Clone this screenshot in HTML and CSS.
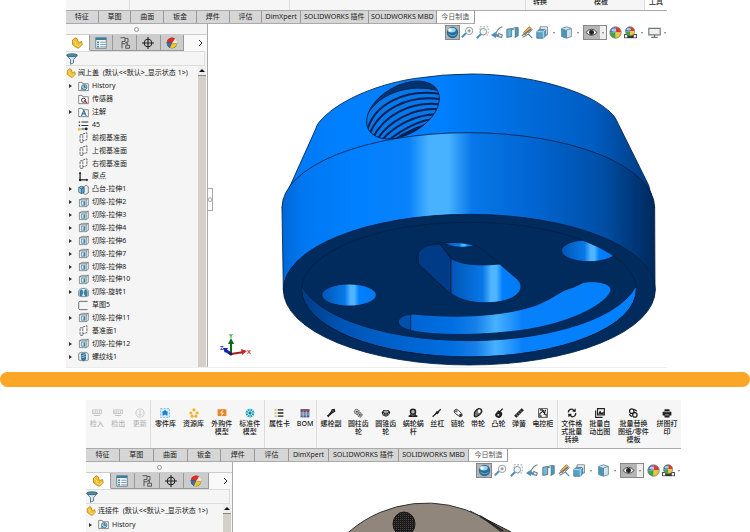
FILE: index.html
```
<!DOCTYPE html>
<html lang="zh-CN">
<head>
    <meta charset="UTF-8">
    <meta name="viewport" content="width=device-width, initial-scale=1.0">
    <title>今日制造</title>
    <link rel="stylesheet" href="styles.css">
</head>
<body>
    <!-- icon sprite -->
    <svg class="sprite" aria-hidden="true">
        <defs>
            <linearGradient id="steel" x1="0" x2="1"><stop offset="0" stop-color="#b9dbea"/><stop offset="1" stop-color="#3f8fb5"/></linearGradient>
            <symbol id="i-part" viewBox="0 0 16 16"><path d="M2 4l4-3 3 2v3l2 1 3-1 1 4-5 5-3-1-5-4z" fill="#f2bd2c" stroke="#a87808"/><path d="M3 5l3 2v3l4 3 4-4" fill="none" stroke="#fff0a0"/></symbol>
            <symbol id="i-list" viewBox="0 0 16 16"><path d="M1 1h14v14H1z" fill="#eef5f8" stroke="#456b80"/><path d="M1 1h14v3H1z" fill="#3c7c9c"/><path d="M3 6h2v2H3zM3 9h2v2H3zM3 12h2v2H3z" fill="#2d6f90"/><path d="M7 7h7M7 10h7M7 13h7" stroke="#6b8794"/></symbol>
            <symbol id="i-config" viewBox="0 0 16 16"><path d="M2 1h6v5H4v9M4 9h4M8 2h4v5H9M8 8h3v3h3v4H9v-4h2" fill="none" stroke="#555" stroke-width="1.300"/></symbol>
            <symbol id="i-target" viewBox="0 0 16 16"><circle cx="8" cy="8" r="5" fill="none" stroke="#222" stroke-width="1.5"/><path d="M8 0v16M0 8h16" stroke="#222" stroke-width="1.5"/></symbol>
            <symbol id="i-ball" viewBox="0 0 16 16"><path d="M8 8V1A7 7 0 0 0 1 8z" fill="#3577c8"/><path d="M8 8V1a7 7 0 0 1 7 7z" fill="#d93a32"/><path d="M8 8h7a7 7 0 0 1-7 7z" fill="#efc72e"/><path d="M8 8v7a7 7 0 0 1-7-7z" fill="#3ca545"/><circle cx="8" cy="8" r="7" fill="none" stroke="#777"/><ellipse cx="6" cy="5" rx="3" ry="2" fill="#fff" opacity=".6"/></symbol>
            <symbol id="i-pie" viewBox="0 0 16 16"><circle cx="8" cy="8" r="7" fill="#222"/><path d="M8 8L1 7a7 7 0 0 1 11-5z" fill="#d92f27"/><path d="M8 8l4-6a7 7 0 0 1 3 7z" fill="#f3e6d0"/><path d="M8 8l7 1a7 7 0 0 1-10 5z" fill="#efc52c"/><path d="M8 8L1 7a7 7 0 0 0 4 7z" fill="#3b6fb5"/></symbol>
            <symbol id="i-funnel" viewBox="0 0 16 16"><path d="M1 3l5 6v6l4-2V9l5-6z" fill="#d9e8ef" stroke="#33586b"/><ellipse cx="8" cy="3" rx="7" ry="2" fill="#4a8caa" stroke="#33586b"/></symbol>
            <symbol id="i-history" viewBox="0 0 16 16"><path d="M1 2h5l1 2h8v10H1z" fill="#fff" stroke="#555"/><circle cx="9" cy="9" r="4" fill="#9fcde0" stroke="#286b8c"/><path d="M9 6v3h3M4 13l3-3" fill="none" stroke="#173f55"/></symbol>
            <symbol id="i-sensor" viewBox="0 0 16 16"><path d="M1 2h5l1 2h8v10H1z" fill="#fff" stroke="#555"/><circle cx="8" cy="9" r="3" fill="none" stroke="#333" stroke-width="1.4"/><path d="M9 9l4 4" stroke="#c33030" stroke-width="2"/></symbol>
            <symbol id="i-note" viewBox="0 0 16 16"><path d="M1 2h5l1 2h8v10H1z" fill="#fff" stroke="#555"/><path d="M5 13l3.500-8 3.500 8M6 10h5" fill="none" stroke="#2373a0" stroke-width="1.600"/></symbol>
            <symbol id="i-material" viewBox="0 0 16 16"><path d="M5 3h10M5 8h10M5 13h5" stroke="#333" stroke-width="1.600"/><path d="M1 2h2v2H1zM1 7h2v2H1z" fill="#333"/><path d="M0 12h4v3H0z" fill="#dfb62c"/><circle cx="12" cy="13" r="2" fill="#222"/></symbol>
            <symbol id="i-plane" viewBox="0 0 16 16"><path d="M3 4h4v11H3zM7 3l6-2v10l-6 2" fill="#fafafa" stroke="#555" stroke-width="1.200" stroke-dasharray="4 1"/></symbol>
            <symbol id="i-origin" viewBox="0 0 16 16"><path d="M3 2v11h11" fill="none" stroke="#222" stroke-width="1.800"/><path d="M1 4l2-3 2 3zM12 11l3 2-3 2z" fill="#222"/><circle cx="3" cy="13" r="1.800" fill="#222"/></symbol>
            <symbol id="i-boss" viewBox="0 0 16 16"><path d="M8 4l4-2 3 2v9l-4 2-3-1z" fill="#eee" stroke="#555"/><path d="M1 5l4-2 4 2v7l-4 2-4-2z" fill="url(#steel)" stroke="#1d5b7a"/><path d="M1 5l4 2 4-2M5 7v7" fill="none" stroke="#1d5b7a"/></symbol>
            <symbol id="i-cut" viewBox="0 0 16 16"><path d="M2 4l4-2h9v10l-3 2H2z" fill="#eee" stroke="#5c6b72"/><path d="M2 4h10v10M12 4l3-2" fill="none" stroke="#5c6b72"/><path d="M5 6h5v6H5z" fill="#d3e9f2" stroke="#4080a0"/><path d="M8 7h2v5H8z" fill="#3584ab"/></symbol>
            <symbol id="i-revolve" viewBox="0 0 16 16"><path d="M1 5l4-3h6l4 3v8l-4 1H5l-4-1z" fill="#d9edf5" stroke="#4c6674"/><path d="M5 4c3 2 2 6 0 9l-2-1V6zM11 4c-3 2-2 6 0 9l2-1V6z" fill="#3887ae" stroke="#205a78"/></symbol>
            <symbol id="i-sketch" viewBox="0 0 16 16"><path d="M14 2H3Q1 2 1 4v8q0 2 2 2h11" fill="none" stroke="#555" stroke-width="1.200"/></symbol>
            <symbol id="i-thread" viewBox="0 0 16 16"><path d="M1 4l3-2h8l3 2v9l-3 1H4l-3-1z" fill="#e4edf1" stroke="#51646e"/><path d="M5 4h6v8l-3 2-3-2z" fill="#2f7da4" stroke="#194c68"/><path d="M5 7l6-2M5 10l6-2" stroke="#c8e4f0"/></symbol>
            <symbol id="i-sphere" viewBox="0 0 16 16"><circle cx="8" cy="8" r="7" fill="#276d96"/><ellipse cx="7" cy="5" rx="5" ry="3" fill="#9ed7f2"/><circle cx="5" cy="5" r="2" fill="#fff"/><path d="M3 10q5 4 10 0" stroke="#6bbde1" fill="none"/></symbol>
            <symbol id="i-zoom" viewBox="0 0 16 16"><circle cx="10" cy="6" r="4.500" fill="#fff" stroke="#778790"/><path d="M6 9l-5 5" stroke="#4a91b5" stroke-width="2.500"/><path d="M8 6h4M10 4v4" stroke="#666"/></symbol>
            <symbol id="i-area" viewBox="0 0 16 16"><path d="M5 1h10v10H5z" fill="none" stroke="#888" stroke-dasharray="2 2"/><circle cx="9" cy="7" r="4" fill="#eef5f8" stroke="#778790"/><path d="M6 10l-5 5" stroke="#4a91b5" stroke-width="2.500"/></symbol>
            <symbol id="i-prev" viewBox="0 0 16 16"><path d="M14 1q-5 1-8 8l2 4 5 1 1-3-5-2" fill="#f4f4f4" stroke="#6c7b82" stroke-width="1.300"/><path d="M0 11l6-4v3h4v3H6v2z" fill="#4a91b5"/></symbol>
            <symbol id="i-section" viewBox="0 0 16 16"><path d="M1 4l6-1v10l-6 1z" fill="#73b8d6" stroke="#486b7c"/><path d="M7 4l3-2h5v10l-4 2V5z" fill="#4e9cbd" stroke="#486b7c"/><path d="M10 2v11" stroke="#fff"/></symbol>
            <symbol id="i-annot" viewBox="0 0 16 16"><path d="M3 8l7-7 3 2-8 8z" fill="#f7a84a" stroke="#b6792b"/><path d="M1 12l11-8M2 14l7-4 5 5M9 9l5-5" stroke="#57798a" stroke-width="1.300" fill="none"/></symbol>
            <symbol id="i-view" viewBox="0 0 16 16"><path d="M5 4V1h9v10h-3" fill="#fff" stroke="#667"/><path d="M1 7l3-3h8v8l-3 3H1z" fill="#58a3c6" stroke="#38718c"/><path d="M1 7h8v8M9 7l3-3" fill="none" stroke="#cae6f1"/></symbol>
            <symbol id="i-cube" viewBox="0 0 16 16"><path d="M2 3l6-2 6 2v10l-6 2-6-2z" fill="#cfe5ee" stroke="#638293"/><path d="M2 3l6 2v10l-6-2z" fill="#4a94b8"/><path d="M8 5l6-2M8 5v10" stroke="#638293"/></symbol>
            <symbol id="i-eye" viewBox="0 0 16 16"><path d="M1 8q7-8 14 0-7 7-14 0z" fill="#eee" stroke="#333"/><circle cx="8" cy="8" r="3" fill="#222"/></symbol>
            <symbol id="i-scene" viewBox="0 0 16 16"><path d="M0 10h16v5H0z" fill="#333"/><path d="M1 11h3v3H1zM12 11h3v3h-3z" fill="#eee"/><use href="#i-ball" x="1" y="0" width="13" height="13"/></symbol>
            <symbol id="i-monitor" viewBox="0 0 16 16"><path d="M1 3h14v8H1z" fill="#eef1f2" stroke="#70777b" stroke-width="1.400"/><path d="M8 11v3M4 14h8" stroke="#70777b" stroke-width="1.500"/></symbol>
            <symbol id="i-pdm" viewBox="0 0 16 16"><path d="M1 3h14v6H1zM3 5v4M6 4v4M9 5v4M12 4v4M3 12h10" fill="none" stroke="#c3c3c3" stroke-width="1.500"/></symbol>
            <symbol id="i-update" viewBox="0 0 16 16"><circle cx="8" cy="8" r="6.500" fill="none" stroke="#c4c4c4" stroke-width="1.300"/><path d="M8 4v8M5 9l3 3 3-3" fill="none" stroke="#c4c4c4" stroke-width="1.500"/></symbol>
            <symbol id="i-puzzle" viewBox="0 0 16 16"><path d="M1 1h14v14H1z" fill="#d9efff" stroke="#3298df" stroke-dasharray="3 2"/><path d="M4 5h2q2-4 4 0h2v7h-2q-2-3-4 0H4z" fill="#1482d8"/></symbol>
            <symbol id="i-dots" viewBox="0 0 16 16"><g fill="#f5b32a"><circle cx="8" cy="3" r="2.600"/><circle cx="3" cy="8" r="2.500"/><circle cx="13" cy="8" r="2.500"/><circle cx="5" cy="13" r="2.500"/><circle cx="11" cy="13" r="2.500"/></g></symbol>
            <symbol id="i-buy" viewBox="0 0 16 16"><path d="M1 2h14v11H1z" fill="#e98425"/><path d="M9 4L6 8h4l-3 4" stroke="#fff" stroke-width="1.500" fill="none"/></symbol>
            <symbol id="i-wheel" viewBox="0 0 16 16"><circle cx="8" cy="8" r="7" fill="#25a2bd"/><path d="M8 1v14M1 8h14M3 3l10 10M13 3L3 13" stroke="#e2f7fb" stroke-width="1.300"/><circle cx="8" cy="8" r="2" fill="#168097"/></symbol>
            <symbol id="i-props" viewBox="0 0 16 16"><path d="M6 3h9M6 8h9M6 13h9" stroke="#222" stroke-width="2.200"/><path d="M1 2h3v2H1zM1 7h3v2H1zM1 12h3v2H1z" fill="#c6a52b"/></symbol>
            <symbol id="i-bom" viewBox="0 0 16 16"><path d="M1 2h14v13H1z" fill="#405a96"/><path d="M1 2h14v3H1z" fill="#994853"/><path d="M1 8h14M1 11h14M5 5v10M10 5v10" stroke="#e7eaf4"/></symbol>
            <symbol id="i-bolt" viewBox="0 0 16 16"><path d="M9 2l5-1 1 5-4 2-6 5-1 2-3-3 2-1 5-6z" fill="#222"/><path d="M10 4l2 2" stroke="#ccc"/></symbol>
            <symbol id="i-gears" viewBox="0 0 16 16"><g fill="#bbb" stroke="#444" stroke-dasharray="2 1" stroke-width="1.500"><circle cx="6" cy="6" r="4"/><circle cx="11" cy="11" r="3.500"/></g><circle cx="6" cy="6" r="1.300" fill="#333"/><circle cx="11" cy="11" r="1.300" fill="#333"/></symbol>
            <symbol id="i-bevel" viewBox="0 0 16 16"><path d="M1 7l3-4h8l3 4-3 5-4 2-5-2z" fill="#222"/><ellipse cx="8" cy="6" rx="4" ry="2" fill="#aaa"/><path d="M8 8v5M4 8l1 4M12 8l-1 4" stroke="#ddd"/></symbol>
            <symbol id="i-worm" viewBox="0 0 16 16"><circle cx="8" cy="6" r="4" fill="#bbb" stroke="#222" stroke-width="2.500"/><path d="M1 13h14M5 10l-2 4M11 10l2 4" stroke="#222" stroke-width="2.500"/></symbol>
            <symbol id="i-screw" viewBox="0 0 16 16"><path d="M1 14L14 2" stroke="#222" stroke-width="2"/><path d="M7 5l5 1-3 4-4-1z" fill="#222"/></symbol>
            <symbol id="i-chain" viewBox="0 0 16 16"><path d="M2 4q3-4 7 0l5 5q2 5-3 5L4 9q-3-2-2-5z" fill="none" stroke="#333" stroke-width="1.600"/><circle cx="5" cy="5" r="2" fill="#777"/><circle cx="12" cy="11" r="2" fill="#222"/></symbol>
            <symbol id="i-belt" viewBox="0 0 16 16"><path d="M2 11Q2 4 9 1q6 0 5 5-2 5-9 8-3 0-3-3z" fill="#777" stroke="#222" stroke-width="2"/><ellipse cx="10" cy="5" rx="2" ry="3" fill="#fff"/></symbol>
            <symbol id="i-cam" viewBox="0 0 16 16"><path d="M14 1L9 6M7 5l5 3q1 5-4 7-6-1-5-5z" fill="#222" stroke="#222" stroke-width="2"/><circle cx="7" cy="11" r="1.500" fill="#ddd"/></symbol>
            <symbol id="i-spring" viewBox="0 0 16 16"><path d="M2 14L14 2" stroke="#222" stroke-width="5"/><path d="M3 10l4 3M6 7l4 3M9 4l4 3" stroke="#bbb"/></symbol>
            <symbol id="i-cabinet" viewBox="0 0 16 16"><path d="M1 1h14v14H1z" fill="#fff" stroke="#222" stroke-width="1.200"/><path d="M3 3h4v3L3 9v4h3M9 3v5M12 3l-2 7h3v4" fill="none" stroke="#222" stroke-width="1.700"/></symbol>
            <symbol id="i-convert" viewBox="0 0 16 16"><path d="M2 7q1-6 7-5l4 4M14 8q0 6-6 6l-5-4M9 5h4V1M7 10H3v4" fill="none" stroke="#222" stroke-width="2"/></symbol>
            <symbol id="i-batch" viewBox="0 0 16 16"><path d="M4 1h11v10H4zM1 4v11h11" fill="none" stroke="#222" stroke-width="1.800"/><path d="M5 9l3-5 3 4 3-3v5z" fill="#222"/></symbol>
            <symbol id="i-replace" viewBox="0 0 16 16"><circle cx="6" cy="5" r="3.500" fill="none" stroke="#222" stroke-width="2"/><circle cx="11" cy="11" r="3.500" fill="none" stroke="#222" stroke-width="2"/><path d="M10 2l4 3M2 10l4 4" stroke="#222" stroke-width="2"/></symbol>
            <symbol id="i-print" viewBox="0 0 16 16"><path d="M4 2h8v4h3v6h-3v3H4v-3H1V6h3z" fill="#222"/><path d="M4 6h8M5 11h6" stroke="#fff"/></symbol>
        </defs>
    </svg>

    <section class="window">
        <div class="ribbon ribbon-cut">
            <div class="cut-group g1"></div>
            <div class="cut-group g2"></div>
            <div class="cut-group g3"></div>
            <div class="cut-group g4"><span>转换</span><span></span><span class="wide">模板</span></div>
            <div class="cut-group g5">工具</div>
        </div>
        <nav class="tabs">
            <button>特征</button><button>草图</button><button>曲面</button><button>钣金</button><button>焊件</button><button>评估</button><button>DimXpert</button><button>SOLIDWORKS 插件</button><button>SOLIDWORKS MBD</button><button class="active">今日制造</button>
        </nav>
        <div class="work">
            <aside class="panel">
                <div class="grip"></div>
                <div class="panel-tabs">
                    <button class="active" aria-label="特征树"><svg><use href="#i-part"/></svg></button>
                    <button aria-label="属性"><svg><use href="#i-list"/></svg></button>
                    <button aria-label="配置"><svg><use href="#i-config"/></svg></button>
                    <button aria-label="尺寸"><svg><use href="#i-target"/></svg></button>
                    <button aria-label="外观"><svg><use href="#i-pie"/></svg></button>
                    <button class="more" aria-label="更多"><svg viewBox="0 0 8 12"><path d="M2 3l3 3-3 3" fill="none" stroke="#333"/></svg></button>
                </div>
                <div class="filter"><svg><use href="#i-funnel"/></svg><input type="text" aria-label="过滤"></div>
                <div class="panel-body">
                    <div class="tree-box">
                        <div class="tree-title"><svg><use href="#i-part"/></svg>阀上盖&nbsp; (默认&lt;&lt;默认&gt;_显示状态 1&gt;)</div>
                        <ul class="tree">
                            <li class="has-child"><svg><use href="#i-history"/></svg>History</li>
                            <li><svg><use href="#i-sensor"/></svg>传感器</li>
                            <li class="has-child"><svg><use href="#i-note"/></svg>注解</li>
                            <li><svg><use href="#i-material"/></svg>45</li>
                            <li><svg><use href="#i-plane"/></svg>前视基准面</li>
                            <li><svg><use href="#i-plane"/></svg>上视基准面</li>
                            <li><svg><use href="#i-plane"/></svg>右视基准面</li>
                            <li><svg><use href="#i-origin"/></svg>原点</li>
                            <li class="has-child"><svg><use href="#i-boss"/></svg>凸台-拉伸1</li>
                            <li class="has-child"><svg><use href="#i-cut"/></svg>切除-拉伸2</li>
                            <li class="has-child"><svg><use href="#i-cut"/></svg>切除-拉伸3</li>
                            <li class="has-child"><svg><use href="#i-cut"/></svg>切除-拉伸4</li>
                            <li class="has-child"><svg><use href="#i-cut"/></svg>切除-拉伸6</li>
                            <li class="has-child"><svg><use href="#i-cut"/></svg>切除-拉伸7</li>
                            <li class="has-child"><svg><use href="#i-cut"/></svg>切除-拉伸8</li>
                            <li class="has-child"><svg><use href="#i-cut"/></svg>切除-拉伸10</li>
                            <li class="has-child"><svg><use href="#i-revolve"/></svg>切除-旋转1</li>
                            <li><svg><use href="#i-sketch"/></svg>草图5</li>
                            <li class="has-child"><svg><use href="#i-cut"/></svg>切除-拉伸11</li>
                            <li><svg><use href="#i-plane"/></svg>基准面1</li>
                            <li class="has-child"><svg><use href="#i-cut"/></svg>切除-拉伸12</li>
                            <li class="has-child"><svg><use href="#i-thread"/></svg>螺纹线1</li>
                        </ul>
                    </div>
                    <div class="scroll"><button aria-label="向上滚动"></button></div>
                </div>
                <span class="splitter"></span>
            </aside>
            <main class="viewport">
                <div class="viewbar">
                    <button class="pressed" aria-label="今日制造"><svg><use href="#i-sphere"/></svg></button>
                    <button aria-label="整屏显示"><svg><use href="#i-zoom"/></svg></button>
                    <button aria-label="局部放大"><svg><use href="#i-area"/></svg></button>
                    <button aria-label="上一视图"><svg><use href="#i-prev"/></svg></button>
                    <button aria-label="剖面视图"><svg><use href="#i-section"/></svg></button>
                    <button aria-label="动态注解"><svg><use href="#i-annot"/></svg></button>
                    <button class="drop" aria-label="视图定向"><svg><use href="#i-view"/></svg></button>
                    <button class="drop" aria-label="显示样式"><svg><use href="#i-cube"/></svg></button>
                    <button class="drop pressed" aria-label="隐藏/显示"><svg><use href="#i-eye"/></svg></button>
                    <button class="after-eye" aria-label="编辑外观"><svg><use href="#i-ball"/></svg></button>
                    <button class="drop" aria-label="应用布景"><svg><use href="#i-scene"/></svg></button>
                    <button class="drop" aria-label="视图设定"><svg><use href="#i-monitor"/></svg></button>
                </div>
                <svg class="model" viewBox="208 41 459 326" role="img" aria-label="阀上盖">
                    <defs>
                        <linearGradient id="cone" x1="57" x2="1130" gradientUnits="userSpaceOnUse"><stop offset="0" stop-color="#0078f3"/><stop offset=".15" stop-color="#0080ff"/><stop offset=".42" stop-color="#0080ff"/><stop offset=".6" stop-color="#0070e3"/><stop offset=".85" stop-color="#005dc2"/><stop offset="1" stop-color="#003b82"/></linearGradient>
                        <linearGradient id="side" x1="36" x2="1154" gradientUnits="userSpaceOnUse"><stop offset="0" stop-color="#0068d8"/><stop offset=".06" stop-color="#0078f2"/><stop offset=".2" stop-color="#0080ff"/><stop offset=".34" stop-color="#0982fa"/><stop offset=".395" stop-color="#48b2ff"/><stop offset=".445" stop-color="#48b2ff"/><stop offset=".51" stop-color="#0877e9"/><stop offset=".68" stop-color="#0064d0"/><stop offset=".86" stop-color="#004fa6"/><stop offset="1" stop-color="#00285b"/></linearGradient>
                        <linearGradient id="wall" x1="95" x2="1100" gradientUnits="userSpaceOnUse"><stop offset="0" stop-color="#003b82"/><stop offset=".12" stop-color="#0054b4"/><stop offset=".45" stop-color="#006fe2"/><stop offset=".52" stop-color="#167fe9"/><stop offset=".58" stop-color="#48b2ff"/><stop offset=".66" stop-color="#0880fb"/><stop offset="1" stop-color="#0080ff"/></linearGradient>
                        <linearGradient id="bore"><stop offset="0" stop-color="#0055b5"/><stop offset=".42" stop-color="#0878e8"/><stop offset=".53" stop-color="#50b4ff"/><stop offset=".6" stop-color="#50b4ff"/><stop offset=".68" stop-color="#0080ff"/><stop offset="1" stop-color="#0078ee"/></linearGradient>
                        <clipPath id="recess"><ellipse cx="597" cy="689" rx="502" ry="202"/></clipPath>
                        <clipPath id="tap"><ellipse cx="399" cy="150" rx="119" ry="73" transform="rotate(-30 399 150)"/></clipPath>
                        <clipPath id="slot"><path d="M440 605C432 575 465 548 525 548C570 546 615 550 640 570L745 660C770 690 735 728 650 728C600 730 560 715 535 695L450 622Z"/></clipPath>
                    </defs>
                    <g transform="translate(270 60) scale(.33333)" stroke="#001f48" stroke-width="2.500" stroke-linejoin="round">
                        <path d="M57 385L137 207Q140 195 148 186C195 128 310 75 430 56Q520 42 605 42C760 42 960 85 1032 168Q1040 180 1046 194L1136 376L1154 443H36Z" fill="url(#cone)"/>
                        <path d="M36 443A559 225 0 0 1 1154 443L1155 688A558 226 0 0 1 40 688Z" fill="url(#side)"/>
                        <ellipse cx="598" cy="689" rx="558" ry="226" fill="#002b5c"/>
                        <ellipse cx="597" cy="689" rx="502" ry="202" fill="url(#wall)"/>
                        <g clip-path="url(#recess)">
                            <ellipse cx="597" cy="640" rx="510" ry="202" fill="#002b5c"/>
                            <ellipse cx="957" cy="572" rx="83" ry="33" fill="url(#bore)"/>
                            <path d="M1032 583L1080 610V560L1000 520Z" fill="#002b5c" stroke="none"/>
                        </g>
                        <ellipse cx="597" cy="689" rx="502" ry="202" fill="none"/>
                        <ellipse cx="237" cy="705" rx="82" ry="33" fill="url(#bore)"/>
                        <path d="M430 762C560 775 700 770 800 735C870 705 870 690 935 668C975 660 1030 668 1022 695C1000 740 880 800 720 815C600 828 480 825 425 812C368 800 375 765 430 762Z" fill="url(#wall)"/>
                        <path d="M422 762C375 768 370 800 422 811Z" fill="#0050aa"/>
                        <path d="M885 690C905 675 925 668 940 667Q920 680 885 690Z" fill="#002b5c"/>
                        <g clip-path="url(#slot)">
                            <path d="M430 540H770V740H430Z" fill="#002b5c"/>
                            <path d="M445 560L510 552L543 595V705L445 610Z" fill="#003b88"/>
                            <path d="M543 595C575 617 640 617 690 612L770 650V740H543Z" fill="url(#bore)"/>
                            <ellipse cx="575" cy="545" rx="50" ry="17" fill="url(#bore)"/>
                            <path d="M510 552L543 595" fill="none"/>
                        </g>
                        <path d="M440 605C432 575 465 548 525 548C570 546 615 550 640 570L745 660C770 690 735 728 650 728C600 730 560 715 535 695L450 622Z" fill="none"/>
                        <g clip-path="url(#tap)">
                            <path d="M270 50H530V250H270Z" fill="#0878e8" stroke="none"/>
                            <path d="M280 190C310 100 420 65 515 95V50H280Z" fill="#003370"/>
                            <g fill="none" stroke="#001f55" stroke-width="6">
                                <path d="M291 215C310 130 410 85 512 102"/>
                                <path d="M298 225C325 150 415 103 512 118"/>
                                <path d="M308 235C340 168 420 122 512 133"/>
                                <path d="M320 240C355 185 430 140 512 148"/>
                                <path d="M333 243C370 200 440 158 512 163"/>
                                <path d="M350 245C390 212 450 176 505 176"/>
                                <path d="M370 245C400 222 450 196 500 192" stroke-width="10"/>
                            </g>
                        </g>
                        <ellipse cx="399" cy="150" rx="119" ry="73" transform="rotate(-30 399 150)" fill="none"/>
                    </g>
                    <g class="triad">
                        <path d="M231 354V340" stroke="#086b17" stroke-width="2"/><path d="M228 344l3-6 3 6z" fill="#086b17"/>
                        <path d="M231 354l13-2" stroke="#a91b1b" stroke-width="2"/><path d="M241 349l6 2-5 4z" fill="#c82828"/>
                        <path d="M231 354l-6-4" stroke="#1724b0" stroke-width="3"/><path d="M223 348l5 0-3 5z" fill="#1724b0"/>
                        <text x="229" y="338" fill="#13a637">Y</text><text x="247" y="354" fill="#e02e2e">X</text><text x="220" y="350" fill="#2638dc">Z</text>
                        <circle cx="231" cy="354" r="1.500" fill="#222"/>
                    </g>
                </svg>
            </main>
        </div>
    </section>

    <div class="divider"></div>

    <section class="window second">
        <div class="ribbon">
            <div class="group">
                <button class="narrow" disabled><svg><use href="#i-pdm"/></svg>检入</button>
                <button class="narrow" disabled><svg><use href="#i-pdm"/></svg>检出</button>
                <button class="narrow" disabled><svg><use href="#i-update"/></svg>更新</button>
            </div>
            <div class="group">
                <button><svg><use href="#i-puzzle"/></svg>零件库</button>
                <button><svg><use href="#i-dots"/></svg>资源库</button>
                <button><svg><use href="#i-buy"/></svg>外购件<br>模型</button>
                <button><svg><use href="#i-wheel"/></svg>标准件<br>模型</button>
            </div>
            <div class="group">
                <button><svg><use href="#i-props"/></svg>属性卡</button>
                <button class="narrow"><svg><use href="#i-bom"/></svg>BOM</button>
            </div>
            <div class="group">
                <button><svg><use href="#i-bolt"/></svg>螺栓副</button>
                <button><svg><use href="#i-gears"/></svg>圆柱齿<br>轮</button>
                <button><svg><use href="#i-bevel"/></svg>圆锥齿<br>轮</button>
                <button><svg><use href="#i-worm"/></svg>蜗轮蜗<br>杆</button>
                <button class="narrow"><svg><use href="#i-screw"/></svg>丝杠</button>
                <button class="narrow"><svg><use href="#i-chain"/></svg>链轮</button>
                <button class="narrow"><svg><use href="#i-belt"/></svg>带轮</button>
                <button class="narrow"><svg><use href="#i-cam"/></svg>凸轮</button>
                <button class="narrow"><svg><use href="#i-spring"/></svg>弹簧</button>
                <button><svg><use href="#i-cabinet"/></svg>电控柜</button>
            </div>
            <div class="group">
                <button><svg><use href="#i-convert"/></svg>文件格<br>式批量<br>转换</button>
                <button><svg><use href="#i-batch"/></svg>批量自<br>动出图</button>
                <button class="wide"><svg><use href="#i-replace"/></svg>批量替换<br>图纸/零件<br>模板</button>
                <button><svg><use href="#i-print"/></svg>拼图打<br>印</button>
            </div>
        </div>
        <nav class="tabs">
            <button>特征</button><button>草图</button><button>曲面</button><button>钣金</button><button>焊件</button><button>评估</button><button>DimXpert</button><button>SOLIDWORKS 插件</button><button>SOLIDWORKS MBD</button><button class="active">今日制造</button>
        </nav>
        <div class="work">
            <aside class="panel">
                <div class="grip"></div>
                <div class="panel-tabs">
                    <button class="active" aria-label="特征树"><svg><use href="#i-part"/></svg></button>
                    <button aria-label="属性"><svg><use href="#i-list"/></svg></button>
                    <button aria-label="配置"><svg><use href="#i-config"/></svg></button>
                    <button aria-label="尺寸"><svg><use href="#i-target"/></svg></button>
                    <button aria-label="外观"><svg><use href="#i-pie"/></svg></button>
                    <button class="more" aria-label="更多"><svg viewBox="0 0 8 12"><path d="M2 3l3 3-3 3" fill="none" stroke="#333"/></svg></button>
                </div>
                <div class="filter"><svg><use href="#i-funnel"/></svg><input type="text" aria-label="过滤"></div>
                <div class="panel-body">
                    <div class="tree-box">
                        <div class="tree-title"><svg><use href="#i-part"/></svg>连接件&nbsp; (默认&lt;&lt;默认&gt;_显示状态 1&gt;)</div>
                        <ul class="tree short">
                            <li class="has-child"><svg><use href="#i-history"/></svg>History</li>
                        </ul>
                    </div>
                    <div class="scroll"><button aria-label="向上滚动"></button></div>
                </div>
            </aside>
            <main class="viewport">
                <div class="viewbar">
                    <button class="pressed" aria-label="今日制造"><svg><use href="#i-sphere"/></svg></button>
                    <button aria-label="整屏显示"><svg><use href="#i-zoom"/></svg></button>
                    <button aria-label="局部放大"><svg><use href="#i-area"/></svg></button>
                    <button aria-label="上一视图"><svg><use href="#i-prev"/></svg></button>
                    <button aria-label="剖面视图"><svg><use href="#i-section"/></svg></button>
                    <button aria-label="动态注解"><svg><use href="#i-annot"/></svg></button>
                    <button class="drop" aria-label="视图定向"><svg><use href="#i-view"/></svg></button>
                    <button class="drop" aria-label="显示样式"><svg><use href="#i-cube"/></svg></button>
                    <button class="drop pressed" aria-label="隐藏/显示"><svg><use href="#i-eye"/></svg></button>
                    <button class="after-eye" aria-label="编辑外观"><svg><use href="#i-ball"/></svg></button>
                    <button class="drop" aria-label="应用布景"><svg><use href="#i-scene"/></svg></button>
                </div>
                <svg class="model" viewBox="233 480 448 320" role="img" aria-label="连接件">
                    <defs><pattern id="mesh" width="2" height="2" patternUnits="userSpaceOnUse"><path d="M0 0h2v2H0z" fill="#1c1a19"/><path d="M0 0l1 1" stroke="#77706a" stroke-width=".5"/></pattern></defs>
                    <path d="M470 512L511 533L540 560H450Z" fill="#6f675f" stroke="#222"/>
                    <path d="M327 560Q335 542 350 532A118 118 0 0 1 482 518L520 548V560Z" fill="#91867c" stroke="#333"/>
                    <path d="M480 517L503 532" stroke="#222" stroke-width="2"/>
                    <ellipse cx="404" cy="525" rx="11" ry="12" fill="url(#mesh)" stroke="#181818"/>
                </svg>
            </main>
        </div>
    </section>
</body>
</html>
```
FILE: styles.css
```
* {
    box-sizing: border-box;
}
body {
    margin: 0;
    height: 100vh;
    overflow: hidden;
    display: flex;
    flex-direction: column;
    background-color: #fff;
    color: #222;
    font-family: "Noto Sans", "Noto Sans CJK SC", sans-serif;
    font-size: 7px;
    line-height: 8px;
}
button, input {
    margin: 0;
    padding: 0;
    border: none;
    background: none;
    color: inherit;
    font: inherit;
}
.sprite {
    position: absolute;
    width: 0;
    height: 0;
}

/* application window */
.window {
    --panel: 142px;
    --tabs: 68%;
    --step: 15px;
    flex: none;
    margin: 0 83px 0 66px;
    border-bottom: 1px solid #eee;
}
.second {
    --panel: 147px;
    --tabs: 71%;
    --step: 16px;
    flex: 1;
    min-height: 0;
    overflow: hidden;
    margin: 0 69px 0 86px;
    border-bottom: none;
}
.divider {
    flex: none;
    height: 15px;
    margin: 4px 0 13px;
    border-radius: 8px;
    background-color: #fba626;
}

/* ribbon */
.ribbon {
    display: flex;
    height: 49px;
    background-color: #f6f6f6;
    border-bottom: 1px solid #aaa;
}
.group {
    display: flex;
    flex: 1 0 auto;
    padding-top: 8px;
    border-right: 1px solid #ddd;
}
.group:last-child {
    border-right: none;
}
.ribbon button {
    display: flex;
    flex-direction: column;
    align-items: center;
    justify-content: flex-start;
    flex: 1 0 auto;
    width: 27px;
    font-weight: 500;
    white-space: nowrap;
}
.ribbon .narrow {
    width: 20px;
}
.ribbon .wide {
    width: 38px;
}
.ribbon button:disabled {
    color: #b5b5b5;
}
.ribbon svg {
    flex: none;
    width: 10px;
    height: 10px;
    margin-bottom: 2px;
}
.ribbon-cut {
    height: 11px;
    overflow: hidden;
    font-weight: 500;
}
.cut-group {
    display: flex;
    align-items: flex-end;
    padding-bottom: 4px;
    border-right: 1px solid #ddd;
    text-align: center;
}
.cut-group span {
    width: 28px;
}
.cut-group .wide {
    width: 38px;
}
.g1 { flex: 63; }
.g2 { flex: 160; }
.g3 { flex: 237; }
.g4 { flex: 119; }
.g5 {
    flex: 22;
    justify-content: center;
    border-right: none;
    background-color: #fff;
}

/* command tabs */
.tabs {
    display: grid;
    grid-template-columns: repeat(6, 33fr) 39fr 68fr 69fr 38fr;
    width: var(--tabs);
    height: 13px;
}
.tabs button {
    background-color: #d6d6d6;
    border-right: 1px solid #999;
    border-bottom: 1px solid #aaa;
    white-space: nowrap;
}
.tabs .active {
    background-color: #fff;
    color: #555;
}

/* feature tree panel */
.work {
    display: flex;
}
.panel {
    position: relative;
    flex: none;
    width: var(--panel);
    background-color: #f5f5f5;
    border-right: 1px solid #aaa;
}
.grip {
    display: flex;
    align-items: center;
    justify-content: center;
    height: 11px;
    border-bottom: 1px solid #ccc;
}
.grip::after {
    content: "";
    width: 3px;
    height: 3px;
    border: 1px solid #999;
    border-radius: 50%;
}
.panel-tabs {
    display: flex;
    height: 16px;
    background-color: #f9f9f9;
}
.panel-tabs button {
    display: flex;
    align-items: center;
    justify-content: center;
    flex: 1;
    background-color: #ccc;
    border-right: 1px solid #999;
    border-bottom: 1px solid #999;
}
.panel-tabs .active {
    background-color: #fff;
    border-bottom-color: #fff;
}
.panel-tabs svg {
    width: 12px;
    height: 12px;
}
.panel-tabs .more {
    justify-content: flex-end;
    background: none;
    border: none;
}
.filter {
    display: flex;
    align-items: center;
    height: 15px;
    margin-right: 2px;
    border: 1px solid #ddd;
    border-left: none;
}
.filter svg {
    width: 12px;
    height: 12px;
}
.filter input {
    flex: 1;
    min-width: 0;
    outline: none;
}
.panel-body {
    display: flex;
}
.tree-box {
    flex: 1;
    min-width: 0;
    overflow: hidden;
    white-space: nowrap;
}
.tree-title {
    display: flex;
    align-items: center;
    gap: 2px;
    height: 14px;
}
.tree-title svg {
    flex: none;
    width: 10px;
    height: 12px;
}
.tree {
    display: grid;
    grid-template-rows: repeat(22, 1fr);
    height: 287px;
    margin: 0;
    padding: 0 0 4px 12px;
    list-style: none;
}
.short {
    grid-template-rows: 13px;
}
.tree li {
    display: flex;
    align-items: center;
    gap: 3px;
    position: relative;
}
.tree svg {
    width: 11px;
    height: 11px;
}
.has-child::before {
    content: "";
    position: absolute;
    left: -9px;
    border: 2px solid transparent;
    border-left: 3px solid #333;
    border-right: none;
}
.scroll {
    width: 8px;
    margin-right: 1px;
    background-color: #d4d0c8;
}
.scroll button {
    display: flex;
    align-items: center;
    justify-content: center;
    width: 100%;
    height: 10px;
    background-color: #eee;
    border-bottom: 1px solid #888;
}
.scroll button::after {
    content: "";
    border: 3px solid transparent;
    border-top: none;
    border-bottom: 3px solid #111;
}
.splitter {
    position: absolute;
    top: 164px;
    right: -6px;
    display: flex;
    align-items: center;
    justify-content: center;
    width: 6px;
    height: 23px;
    background-color: #fff;
    border: 1px solid #aaa;
}
.splitter::after {
    content: "";
    width: 3px;
    height: 3px;
    border: 1px solid #aaa;
    border-radius: 50%;
}

/* graphics area */
.viewport {
    flex: 1;
    min-width: 0;
}
.viewbar {
    display: flex;
    justify-content: flex-end;
    height: 17px;
    padding-top: 1px;
}
.viewbar button {
    display: flex;
    align-items: center;
    justify-content: center;
    flex: none;
    width: var(--step);
    height: 15px;
}
.viewbar svg {
    flex: none;
    width: 13px;
    height: 13px;
}
.viewbar .pressed {
    background-color: #b5b5b5;
    border: 1px solid #888;
}
.viewbar .drop {
    justify-content: space-between;
    width: 24px;
    padding: 0 4px 0 1px;
}
.viewbar .drop::after {
    content: "";
    border: 1px solid transparent;
    border-top: 2px solid #777;
    border-bottom: none;
}
.viewbar .drop.pressed {
    padding: 0 2px 0 1px;
    background-image: linear-gradient(to right, transparent 16px, #eee 16px);
}
.viewbar .drop:last-child {
    width: 20px;
    padding-right: 1px;
}
.viewbar .after-eye {
    margin-left: 1px;
}
.model {
    display: block;
    width: 100%;
    height: auto;
}
.triad text {
    font-size: 6px;
    font-weight: 700;
}
```
